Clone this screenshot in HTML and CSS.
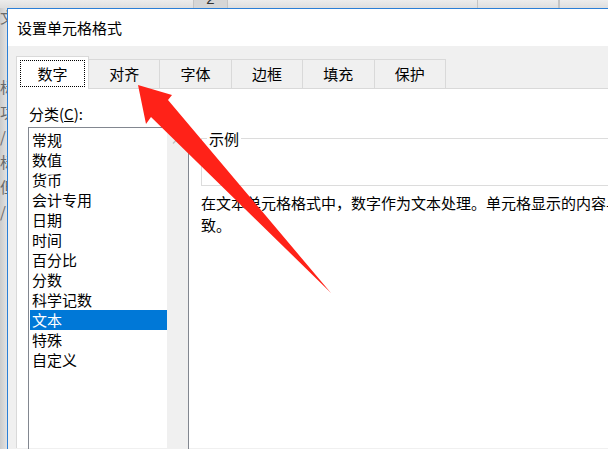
FILE: index.html
```html
<!DOCTYPE html>
<html lang="zh-CN">
<head>
    <meta charset="UTF-8">
    <meta name="viewport" content="width=device-width, initial-scale=1.0">
    <title>设置单元格格式</title>
    <link rel="stylesheet" href="styles.css">
</head>
<body>

    <!-- Spreadsheet behind the dialog -->
    <div class="sheet-top">
        <div class="col col-a"></div>
        <div class="col col-b"><span class="num">2</span></div>
        <div class="col col-c"></div>
        <div class="col col-d"></div>
        <div class="col"></div>
    </div>

    <div class="main">
        <div class="sheet-left">
            <div class="first">文</div>
            <div>标</div>
            <div>功</div>
            <div>/</div>
            <div>标</div>
            <div>但</div>
            <div>/</div>
        </div>

        <!-- Format Cells dialog -->
        <div class="dialog">
            <div class="title">设置单元格格式</div>
            <div class="body">
                <div class="tabs">
                    <div class="tab active"><span>数字</span></div>
                    <div class="tab">对齐</div>
                    <div class="tab">字体</div>
                    <div class="tab">边框</div>
                    <div class="tab">填充</div>
                    <div class="tab">保护</div>
                </div>

                <div class="panel">
                    <div class="category">
                        <div class="label">分类(<u>C</u>):</div>
                        <div class="listbox">
                            <ul class="list">
                                <li>常规</li>
                                <li>数值</li>
                                <li>货币</li>
                                <li>会计专用</li>
                                <li>日期</li>
                                <li>时间</li>
                                <li>百分比</li>
                                <li>分数</li>
                                <li>科学记数</li>
                                <li class="selected">文本</li>
                                <li>特殊</li>
                                <li>自定义</li>
                            </ul>
                            <div class="scroll">
                                <svg width="10" height="6" viewBox="0 0 10 6"><path d="M1 5.5 L5 1.5 L9 5.5" fill="none" stroke="#c2c2c2" stroke-width="1.3"/></svg>
                            </div>
                        </div>
                    </div>

                    <div class="detail">
                        <fieldset class="sample">
                            <legend>示例</legend>
                        </fieldset>
                        <p class="desc">在文本单元格格式中，数字作为文本处理。单元格显示的内容与输入的内容完全一致。</p>
                    </div>
                </div>
            </div>
        </div>
    </div>

    <!-- Red annotation arrow -->
    <svg class="arrow" width="608" height="449" viewBox="0 0 608 449">
        <polygon points="138,85 172,95 168,100 331,293 151,117 146,124" fill="#ff2218"/>
    </svg>

</body>
</html>
```

FILE: styles.css
```css
/* General */
* { box-sizing: border-box; }
body { margin: 0; width: 608px; height: 449px; overflow: hidden; position: relative; background: #fff;
       font-family: "Noto Sans CJK SC", sans-serif; font-size: 15px; color: #000; }

/* Spreadsheet behind */
.sheet-top { display: flex; height: 8px; overflow: hidden; background: linear-gradient(#ececec, #dedede); }
.sheet-top .col { flex: none; border-right: 1px solid #c4c4c4; }
.col-a { width: 194px; }
.col-b { width: 34px; background: #d6d6d6; text-align: center; }
.col-c { width: 250px; }
.col-d { width: 81px; }
.num { display: block; font-family: "Liberation Sans", sans-serif; line-height: 15px; margin-top: -9px; color: #333; }

.main { display: flex; height: 441px; }
.sheet-left { width: 7px; flex: none; overflow: hidden; white-space: nowrap; color: #6a6a6a;
              background: linear-gradient(to right, #cbcbcb, #e2e2e2); }
.sheet-left div { line-height: 25px; }
.sheet-left .first { margin-top: -4px; margin-bottom: 45px; }

/* Dialog */
.dialog { width: 640px; flex: none; background: #f0f0f0; border-top: 1px solid #2a7ed6; border-left: 1px solid #2a7ed6; }
.title { height: 37px; line-height: 37px; padding-left: 9px; background: #fff; }
.body { padding: 10px 0 0 8px; }

/* Tabs */
.tabs { display: flex; align-items: flex-end; height: 32px; }
.tab { flex: none; width: 71.4px; height: 29px; line-height: 28px; text-align: center;
       border-top: 1px solid #d9d9d9; border-right: 1px solid #d9d9d9; }
.tab.active { width: 73px; height: 33px; margin-bottom: -1px; padding: 3px 3px 0; background: #fff;
              border-left: 1px solid #d9d9d9; position: relative; }
.tab.active span { display: block; height: 27px; line-height: 25px; border: 1px dotted #000; }

/* Panel */
.panel { display: flex; height: 360px; padding-left: 11px; background: #fff;
         border-top: 1px solid #d9d9d9; border-left: 1px solid #d9d9d9; }
.category { padding-top: 15px; }
.label { line-height: 20px; margin: 0 0 3px 1px; }
.listbox { display: flex; width: 161px; height: 330px; border: 1px solid #828790; }
.list { list-style: none; margin: 0; padding: 2px 0 0 1px; width: 138px; }
.list li { height: 20px; line-height: 20px; padding-left: 2px; }
.list li.selected { background: #0078d7; color: #fff; }
.scroll { width: 21px; background: #f0f0f0; }
.scroll svg { display: block; margin: 10px 0 0 5px; }

.detail { padding: 42px 0 0 12px; }
.sample { width: 500px; height: 55px; margin: 0; padding: 0 0 0 5px; border: 1px solid #dcdcdc; }
.sample legend { padding: 0 2px; line-height: 15px; }
.desc { width: 545px; margin: 6px 0 0; line-height: 22px; }

/* Annotation */
.arrow { position: absolute; top: 0; left: 0; pointer-events: none; }
```
